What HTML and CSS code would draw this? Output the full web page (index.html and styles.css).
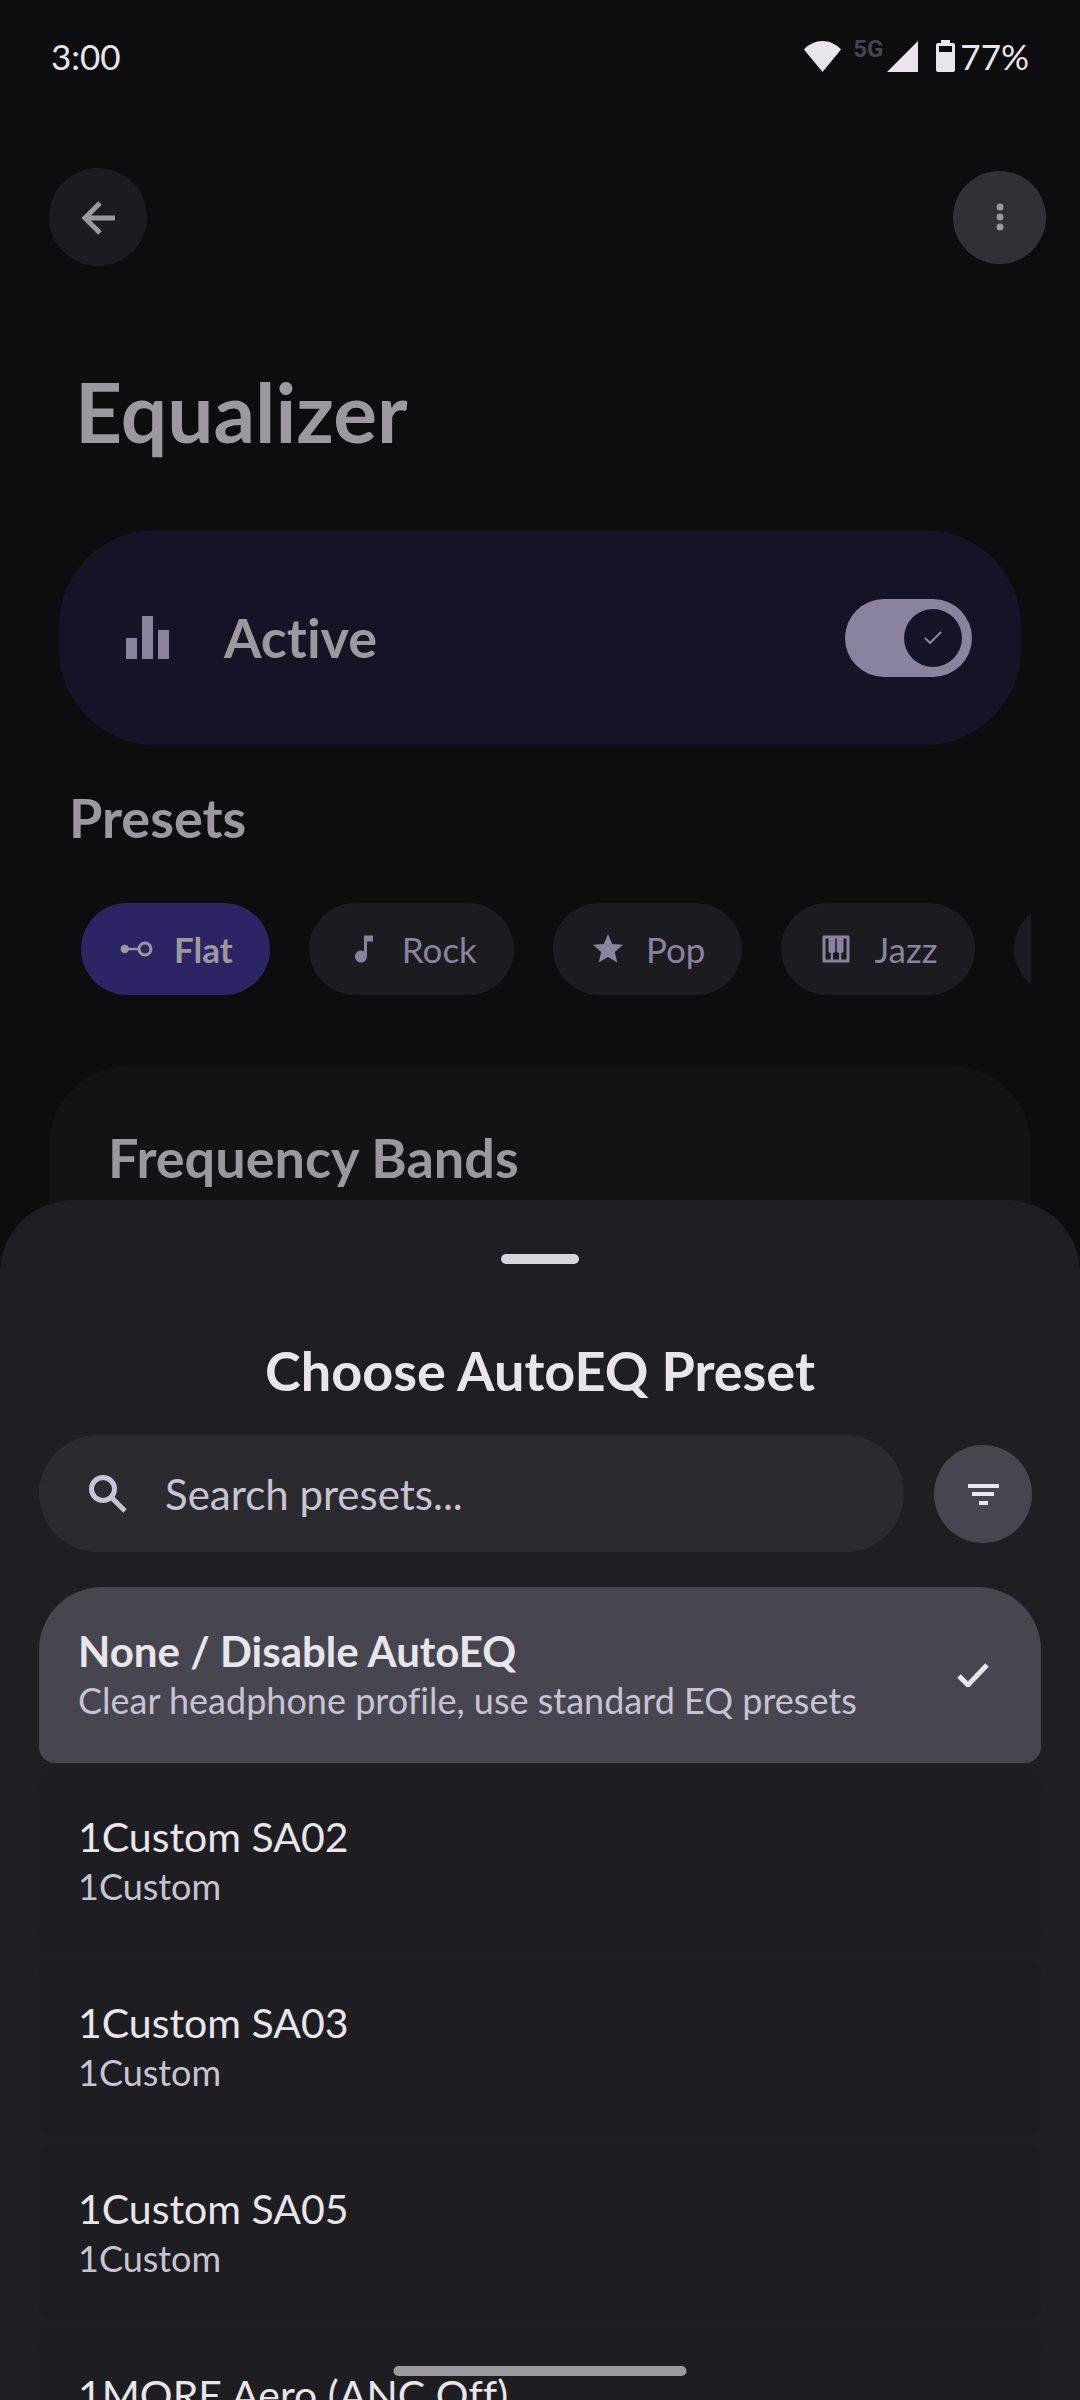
FILE: index.html
```html
<!DOCTYPE html>
<html lang="en">
<head>
    <meta charset="UTF-8">
    <meta name="viewport" content="width=device-width, initial-scale=1.0">
    <title>Equalizer</title>
    <link rel="stylesheet" href="styles.css">
</head>
<body>
    <div class="status-bar">
        <span class="time">3:00</span>
        <div class="status-icons">
            <svg class="wifi" viewBox="0 0 37 31"><path d="M18.500 31L0 8.500C5 3 11.500 0 18.500 0S32 3 37 8.500z"/></svg>
            <span class="network">5G</span>
            <svg class="signal" viewBox="0 0 31 31"><path d="M31 0v31H0z"/></svg>
            <svg class="battery" viewBox="0 0 19 32"><path fill-rule="evenodd" d="M5 0h9v3h3a2 2 0 0 1 2 2v25a2 2 0 0 1-2 2H2a2 2 0 0 1-2-2V5a2 2 0 0 1 2-2h3zM3 6v6h13V6z"/></svg>
            <span class="percent">77%</span>
        </div>
    </div>

    <main class="page">
        <header class="top-bar">
            <button type="button" class="round-button" aria-label="Back">
                <svg class="icon-back" viewBox="0 0 34 34"><path d="M34 18H5M19 3L4 18l15 15"/></svg>
            </button>
            <button type="button" class="round-button menu-button" aria-label="More options">
                <svg class="icon-more" viewBox="0 0 8 28"><circle cx="4" cy="4" r="3.500"/><circle cx="4" cy="14" r="3.500"/><circle cx="4" cy="24" r="3.500"/></svg>
            </button>
        </header>

        <h1>Equalizer</h1>

        <label class="active-card">
            <svg class="icon-bars" viewBox="0 0 43 43"><path d="M0 22h11v21H0zM16 0h11v43H16zM32 14h11v29H32z"/></svg>
            <span class="active-text">Active</span>
            <span class="switch">
                <input type="checkbox" checked>
                <svg class="switch-check" viewBox="0 0 18 14"><path d="M1 7l5 5L17 1"/></svg>
            </span>
        </label>

        <h2>Presets</h2>
        <div class="chips">
            <button type="button" class="chip selected">
                <svg viewBox="0 0 24 24"><circle cx="4.500" cy="12" r="2.800"/><path d="M5 11.200h9v1.600H5z"/><circle class="ring" cx="18" cy="12" r="4"/></svg>
                Flat
            </button>
            <button type="button" class="chip">
                <svg viewBox="0 0 24 24"><path d="M12 3v10.550c-.59-.34-1.270-.55-2-.55-2.210 0-4 1.790-4 4s1.790 4 4 4 4-1.790 4-4V7h4V3z"/></svg>
                Rock
            </button>
            <button type="button" class="chip">
                <svg viewBox="0 0 24 24"><path d="M12 17.270L18.180 21l-1.640-7.030L22 9.240l-7.190-.61L12 2 9.190 8.630 2 9.240l5.460 4.730L5.820 21z"/></svg>
                Pop
            </button>
            <button type="button" class="chip">
                <svg viewBox="0 0 24 24"><path fill-rule="evenodd" d="M20 3H4a1 1 0 0 0-1 1v16a1 1 0 0 0 1 1h16a1 1 0 0 0 1-1V4a1 1 0 0 0-1-1zM5 5h2v8.500c0 .550.450 1 1 1h.500V19H5zM10 19v-4.500h.500c.550 0 1-.450 1-1V5h1v8.500c0 .550.450 1 1 1h.500V19zM19 19h-3.500v-4.500h.500c.550 0 1-.450 1-1V5h2z"/></svg>
                Jazz
            </button>
            <button type="button" class="chip" aria-label="More presets">
                <svg viewBox="0 0 24 24"></svg>
            </button>
        </div>

        <section class="bands-card">
            <h2>Frequency Bands</h2>
        </section>
    </main>

    <!-- AutoEQ preset picker -->
    <div class="sheet" role="dialog" aria-labelledby="sheetTitle">
        <div class="handle"></div>
        <h2 id="sheetTitle" class="sheet-title">Choose AutoEQ Preset</h2>

        <div class="search-row">
            <label class="search-box">
                <svg class="icon-search" viewBox="0 0 38 38"><circle cx="14" cy="14" r="11.500"/><path d="M22 22l14 14"/></svg>
                <input type="text" placeholder="Search presets..." aria-label="Search presets">
            </label>
            <button type="button" class="round-button filter-button" aria-label="Filter">
                <svg class="icon-filter" viewBox="0 0 32 22"><path d="M1 1h31v4H1zM5 9h22v4H5zM12 18h9v4h-9z"/></svg>
            </button>
        </div>

        <div class="preset-list">
            <button type="button" class="preset current">
                <span class="preset-text">
                    <span class="preset-name">None / Disable AutoEQ</span>
                    <span class="preset-brand">Clear headphone profile, use standard EQ presets</span>
                </span>
                <svg class="icon-check" viewBox="0 0 32 24"><path d="M2 13l9 9L30 2"/></svg>
            </button>
            <button type="button" class="preset">
                <span class="preset-text">
                    <span class="preset-name">1Custom SA02</span>
                    <span class="preset-brand">1Custom</span>
                </span>
            </button>
            <button type="button" class="preset">
                <span class="preset-text">
                    <span class="preset-name">1Custom SA03</span>
                    <span class="preset-brand">1Custom</span>
                </span>
            </button>
            <button type="button" class="preset">
                <span class="preset-text">
                    <span class="preset-name">1Custom SA05</span>
                    <span class="preset-brand">1Custom</span>
                </span>
            </button>
            <button type="button" class="preset">
                <span class="preset-text">
                    <span class="preset-name">1MORE Aero (ANC Off)</span>
                </span>
            </button>
        </div>
    </div>

    <div class="nav-pill"></div>
</body>
</html>
```

FILE: styles.css
```css
* {
    box-sizing: border-box;
}
body {
    font-family: Lato, "Open Sans", sans-serif;
    font-variant-ligatures: none;
    background-color: #0d0d0f;
    color: #9c999e;
    margin: 0;
    height: 100vh;
    overflow: hidden;
}
h1, h2 {
    margin: 0;
    font-weight: bold;
}
h1 {
    font-size: 82px;
    line-height: 96px;
    margin: 97px 26px 71px;
}
h2 {
    font-size: 54px;
    line-height: 68px;
}
button {
    font-family: inherit;
    font-variant-ligatures: inherit;
    color: inherit;
    border: none;
    padding: 0;
    cursor: pointer;
}
svg {
    display: block;
    flex: none;
    fill: currentColor;
}

/* status bar */
.status-bar {
    display: flex;
    justify-content: space-between;
    align-items: center;
    height: 112px;
    padding: 0 51px;
    color: #e8e5eb;
    font-size: 35px;
}
.status-icons {
    display: flex;
    align-items: center;
}
.wifi {
    width: 37px;
    height: 31px;
    margin-right: 12px;
}
.network {
    font-family: Roboto, sans-serif;
    font-size: 24px;
    line-height: 24px;
    font-weight: bold;
    color: #45434f;
    margin: 0 4px 14px 0;
}
.signal {
    width: 31px;
    height: 31px;
    margin-right: 18px;
}
.battery {
    width: 19px;
    height: 32px;
    margin-right: 5px;
}

/* page behind the sheet */
.page {
    padding: 56px 49px 0;
}
.top-bar {
    display: flex;
    justify-content: space-between;
    align-items: center;
    margin-right: -15px;
}
.round-button {
    display: flex;
    justify-content: center;
    align-items: center;
    flex: none;
    width: 98px;
    height: 98px;
    border-radius: 50%;
    background-color: #1c1b1f;
}
.menu-button {
    width: 93px;
    height: 93px;
    background-color: #313035;
}
.icon-back {
    width: 34px;
    height: 34px;
    fill: none;
    stroke: currentColor;
    stroke-width: 5;
    overflow: visible;
}
.icon-more {
    width: 8px;
    height: 28px;
}
.active-card {
    display: flex;
    align-items: center;
    height: 215px;
    margin: 0 10px 39px;
    padding: 0 49px 0 67px;
    border-radius: 96px;
    background-color: #171326;
}
.icon-bars {
    width: 43px;
    height: 43px;
    margin-right: 55px;
    color: #8a839f;
}
.active-text {
    flex: 1;
    font-size: 54px;
    font-weight: bold;
}
.switch {
    display: grid;
    align-items: center;
    justify-items: end;
    color: #8a839f;
}
.switch input {
    grid-area: 1 / 1;
    appearance: none;
    display: flex;
    justify-content: flex-end;
    width: 127px;
    height: 78px;
    margin: 0;
    padding: 10px;
    border-radius: 39px;
    background-color: #8a839f;
}
.switch input::before {
    content: "";
    width: 58px;
    height: 58px;
    border-radius: 50%;
    background-color: #171326;
}
.switch-check {
    grid-area: 1 / 1;
    z-index: 1;
    width: 18px;
    height: 14px;
    margin-right: 30px;
    fill: none;
    stroke: currentColor;
    stroke-width: 2;
}
.page > h2 {
    margin-left: 20px;
}
.chips {
    display: flex;
    gap: 39px;
    margin: 51px 0 71px;
    padding-left: 32px;
    overflow: hidden;
}
.chip {
    display: flex;
    align-items: center;
    flex: none;
    gap: 20px;
    height: 92px;
    padding: 0 37px;
    border-radius: 46px;
    background-color: #1c1b1f;
    color: #8a839f;
    font-size: 35px;
}
.chip svg {
    width: 36px;
    height: 36px;
}
.chip .ring {
    fill: none;
    stroke: currentColor;
    stroke-width: 2;
}
.chip.selected {
    background-color: #2d2466;
    color: #9c999e;
    font-weight: bold;
}
.bands-card {
    height: 400px;
    padding: 58px 59px;
    border-radius: 80px;
    background-color: #131315;
}

/* bottom sheet */
.sheet {
    position: fixed;
    top: 50%;
    left: 0;
    right: 0;
    bottom: 0;
    overflow: hidden;
    padding: 54px 39px 0;
    border-radius: 73px 73px 0 0;
    background-color: #1f1e23;
    color: #e8e5eb;
}
.handle {
    width: 78px;
    height: 10px;
    margin: 0 auto 73px;
    border-radius: 5px;
    background-color: #d8d4e0;
}
.sheet-title {
    text-align: center;
}
.search-row {
    display: flex;
    align-items: center;
    gap: 30px;
    margin: 30px 9px 35px 0;
}
.search-box {
    display: flex;
    align-items: center;
    flex: 1;
    gap: 38px;
    height: 117px;
    padding: 0 50px;
    border-radius: 59px;
    background-color: #2b2a2f;
    color: #c7c3d2;
}
.search-box input {
    flex: 1;
    min-width: 0;
    padding: 0;
    border: none;
    outline: none;
    background: none;
    color: inherit;
    font-family: inherit;
    font-size: 42px;
}
.search-box input::placeholder {
    color: #c7c3d2;
}
.icon-search {
    width: 38px;
    height: 38px;
    fill: none;
    stroke: currentColor;
    stroke-width: 5;
}
.filter-button {
    background-color: #464550;
}
.icon-filter {
    width: 32px;
    height: 22px;
}
.preset-list {
    display: flex;
    flex-direction: column;
    gap: 10px;
}
.preset {
    display: flex;
    align-items: center;
    justify-content: space-between;
    flex: none;
    height: 176px;
    padding: 0 52px 0 39px;
    border-radius: 16px;
    background-color: #1e1d22;
    text-align: left;
}
.preset-text {
    display: flex;
    flex-direction: column;
    gap: 4px;
    height: 96px;
}
.preset-name {
    font-size: 41px;
    line-height: 48px;
}
.preset-brand {
    font-size: 36px;
    line-height: 42px;
    color: #c7c3d2;
}
.preset.current {
    border-radius: 63px 63px 16px 16px;
    background-color: #464550;
}
.current .preset-name {
    font-size: 42px;
    font-weight: bold;
}
.icon-check {
    width: 32px;
    height: 24px;
    fill: none;
    stroke: currentColor;
    stroke-width: 5;
}

/* gesture bar */
.nav-pill {
    position: fixed;
    bottom: 24px;
    left: 50%;
    width: 293px;
    height: 10px;
    transform: translateX(-50%);
    border-radius: 5px;
    background-color: #9c999e;
}
```
